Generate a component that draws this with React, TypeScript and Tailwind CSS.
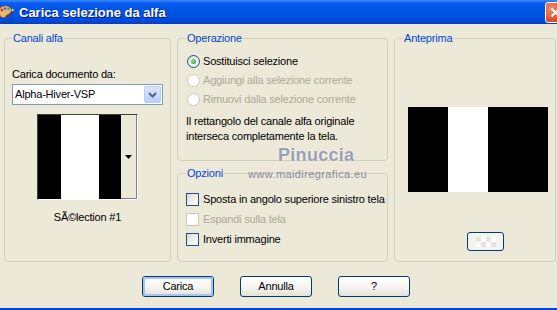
import React from 'react';

function PaletteIcon() {
  return (
    <svg width="16" height="16" viewBox="0 0 16 16" className="-ml-[2px]">
      <path d="M1 8 C1 3 5 1 9 2 C14 3 15 8 12 10 C10 11 9 10 8 12 C7 15 1 14 1 8 Z" fill="#e9b477" stroke="#8a4a1c" strokeWidth="0.8" />
      <circle cx="4" cy="6" r="1.3" fill="#d22" />
      <circle cx="7" cy="4.5" r="1.3" fill="#2a6de0" />
      <circle cx="10.5" cy="5" r="1.3" fill="#2bb34a" />
      <circle cx="4.5" cy="10" r="1.3" fill="#f2d21a" />
      <path d="M9 14 L15 6" stroke="#6b3a12" strokeWidth="1.6" />
      <path d="M14 7 L15.5 5" stroke="#ddd" strokeWidth="1.6" />
    </svg>
  );
}

function Radio({ label, checked, disabled }: { label: string; checked?: boolean; disabled?: boolean }) {
  return (
    <div className="h-[19px] flex items-center gap-[3px] ml-[1px]">
      <div
        className={`w-[13px] h-[13px] rounded-full border flex items-center justify-center ${
          disabled ? 'border-[#cac8bb] bg-white' : 'border-[#1c5180] bg-[linear-gradient(135deg,#dcdcd7,#ffffff)]'
        }`}
      >
        {checked && <div className="w-[5px] h-[5px] rounded-full bg-[radial-gradient(circle_at_35%_35%,#8ee08e,#21a121)]" />}
      </div>
      <span className={disabled ? 'text-[#aca899]' : 'text-black'}>{label}</span>
    </div>
  );
}

function Check({ label, disabled }: { label: string; disabled?: boolean }) {
  return (
    <div className="h-[20px] flex items-center gap-[4px]">
      <div
        className={`w-[13px] h-[13px] border ${
          disabled ? 'border-[#cac8bb] bg-white' : 'border-[#1c5180] bg-[linear-gradient(135deg,#dcdcd7,#ffffff)]'
        }`}
      />
      <span className={disabled ? 'text-[#aca899]' : 'text-black'}>{label}</span>
    </div>
  );
}

function Legend({ children, left }: { children: React.ReactNode; left: string }) {
  return (
    <span className={`absolute -top-[8px] ${left} px-[1px] bg-[#ece9d8] text-[#0046d5] leading-[14px]`}>{children}</span>
  );
}

function XpButton({ label, isDefault }: { label: string; isDefault?: boolean }) {
  return (
    <button className="w-[72px] h-[21px] rounded-[3px] border border-[#003c74] bg-[linear-gradient(#ffffff,#f4f3ee_60%,#e3e1d6)] p-0">
      <div
        className={`w-full h-full rounded-[2px] flex items-center justify-center text-black ${
          isDefault ? 'border-2 border-[#a8c4ee]' : ''
        }`}
      >
        {label}
      </div>
    </button>
  );
}

export default function App() {
  return (
    <div className="w-[557px] h-[310px] bg-[#ece9d8] flex flex-col overflow-hidden relative font-['Liberation_Sans',Arial,sans-serif] text-[11px] tracking-[-0.2px] leading-[13px]">
      {/* Title bar */}
      <div className="h-[24px] shrink-0 flex items-center overflow-hidden bg-[linear-gradient(#3d8bff_0px,#0a5df0_3px,#0055e5_8px,#0052df_16px,#0049d8_21px,#003fc8_24px)]">
        <PaletteIcon />
        <span className="ml-[5px] text-white font-bold text-[13px] tracking-normal [text-shadow:1px_1px_#0a1883]">
          Carica selezione da alfa
        </span>
        <div className="ml-auto -mr-[9px] w-[21px] h-[21px] mt-[1px] rounded-[3px] border border-white bg-[radial-gradient(circle_at_30%_30%,#f28d6c,#e0502b_60%,#c03a1a)] flex items-center justify-center">
          <svg width="11" height="11" viewBox="0 0 11 11">
            <path d="M1.5 1.5 L9.5 9.5 M9.5 1.5 L1.5 9.5" stroke="white" strokeWidth="2" />
          </svg>
        </div>
      </div>

      {/* Body */}
      <div className="flex pl-[4px] mt-[14px] gap-[6px]">
        {/* Canali alfa */}
        <div className="relative w-[167px] h-[224px] border border-[#d0d0bf] rounded-[4px] flex flex-col pl-[7px] pt-[29px]">
          <Legend left="left-[7px]">Canali alfa</Legend>
          <span>Carica documento da:</span>
          <div className="mt-[3px] w-[151px] h-[21px] bg-white border border-[#7f9db9] flex items-center pl-[2px] pr-[1px]">
            <span className="flex-1">Alpha-Hiver-VSP</span>
            <div className="w-[17px] h-[17px] rounded-[2px] border border-[#b9cdf8] bg-[linear-gradient(#dbe6fd,#b9cef9)] flex items-center justify-center">
              <svg width="9" height="6" viewBox="0 0 9 6">
                <path d="M1 1 L4.5 4.5 L8 1" stroke="#4d6185" strokeWidth="2" fill="none" />
              </svg>
            </div>
          </div>
          <div className="w-[151px] flex flex-col items-center">
            <div className="mt-[9px] w-[101px] h-[86px] border-t border-l border-[#404040] border-r-white border-b-white border-r border-b flex bg-black">
              <div className="w-[83px] flex pl-[1px]">
                <div className="w-[22px] bg-black" />
                <div className="w-[38px] bg-white" />
                <div className="w-[22px] bg-black" />
              </div>
              <div className="flex-1 bg-[#ece9d8] border-r border-b border-[#808080] flex justify-center pt-[40px]">
                <svg width="7" height="4" viewBox="0 0 7 4">
                  <path d="M0 0 H7 L3.5 4 Z" fill="black" />
                </svg>
              </div>
            </div>
            <span className="mt-[11px]">SÃ©lection #1</span>
          </div>
        </div>

        {/* Middle column */}
        <div className="w-[211px] flex flex-col gap-[12px]">
          <div className="relative h-[123px] border border-[#d0d0bf] rounded-[4px] pl-[8px] pt-[13px]">
            <Legend left="left-[8px]">Operazione</Legend>
            <Radio label="Sostituisci selezione" checked />
            <Radio label="Aggiungi alla selezione corrente" disabled />
            <Radio label="Rimuovi dalla selezione corrente" disabled />
            <p className="mt-[5px] leading-[15px]">
              Il rettangolo del canale alfa originale
              <br />
              interseca completamente la tela.
            </p>
          </div>
          <div className="relative h-[89px] border border-[#d0d0bf] rounded-[4px] pl-[8px] pt-[15px]">
            <Legend left="left-[8px]">Opzioni</Legend>
            <Check label="Sposta in angolo superiore sinistro tela" />
            <Check label="Espandi sulla tela" disabled />
            <Check label="Inverti immagine" />
          </div>
        </div>

        {/* Anteprima */}
        <div className="relative w-[162px] h-[224px] border border-[#d0d0bf] rounded-[4px] flex flex-col pl-[13px] pt-[68px]">
          <Legend left="left-[8px]">Anteprima</Legend>
          <div className="w-[140px] h-[85px] flex">
            <div className="w-[40px] bg-black" />
            <div className="w-[40px] bg-white" />
            <div className="w-[60px] bg-black" />
          </div>
          <div className="mt-[40px] ml-[59px] w-[37px] h-[19px] rounded-[3px] border border-[#003c74] bg-[#f4f3ee] flex items-center justify-center">
            <div className="w-[20px] h-[10px] bg-[repeating-conic-gradient(#ffffff_0_25%,#e4e3dd_0_50%)] bg-[length:10px_10px]" />
          </div>
        </div>
      </div>

      {/* Buttons */}
      <div className="flex pl-[142px] gap-[26px] mt-[14px]">
        <XpButton label="Carica" isDefault />
        <XpButton label="Annulla" />
        <XpButton label="?" />
      </div>

      <div className="mt-auto h-[2px] bg-[#0842d6]" />

      {/* Watermark */}
      <div className="absolute left-[278px] top-[145px] text-[18px] font-bold tracking-[0.3px] text-[#9aa0b4] [text-shadow:0_0_2px_#ffffff] leading-[20px]">
        Pinuccia
      </div>
      <div className="absolute left-[248px] top-[168px] text-[11px] tracking-[0.4px] text-[#8a8c9a] leading-[12px]">
        www.maidiregrafica.eu
      </div>
    </div>
  );
}
